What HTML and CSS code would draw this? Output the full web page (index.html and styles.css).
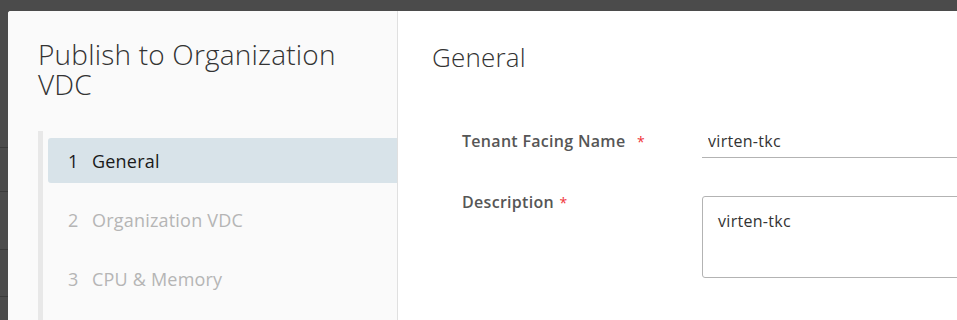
FILE: index.html
```html
<!DOCTYPE html>
<html lang="en">
<head>
<meta charset="UTF-8" />
<title>Publish to Organization VDC</title>
<link rel="stylesheet" href="styles.css">
</head>
<body>

<div class="backdrop">
  <div class="bg-lines">
    <span></span><span></span><span></span><span></span>
  </div>

  <div class="modal">
    <nav class="wizard-nav">
      <h2>Publish to Organization VDC</h2>
      <div class="steps">
        <a class="step active"><span class="num">1</span>General</a>
        <a class="step"><span class="num">2</span>Organization VDC</a>
        <a class="step"><span class="num">3</span>CPU &amp; Memory</a>
      </div>
    </nav>

    <main class="wizard-body">
      <h3>General</h3>
      <form class="form">
        <div class="row">
          <label for="tenant-name">Tenant Facing Name <span class="req wide">*</span></label>
          <input type="text" id="tenant-name" value="virten-tkc" />
        </div>
        <div class="row row-area">
          <label for="desc">Description <span class="req">*</span></label>
          <textarea id="desc">virten-tkc</textarea>
        </div>
      </form>
    </main>
  </div>
</div>

</body>
</html>
```

FILE: styles.css
```css
:root {
  --overlay: #4b4b4b;
  --nav-bg: #fafafa;
  --active: #d8e3e9;
  --text: #333;
  --muted: #b5b5b5;
  --border: #b3b3b3;
}
html, body {
  margin: 0; padding: 0;
  height: 100%;
  overflow: hidden;
}
body {
  font-family: 'Open Sans', 'Noto Sans', sans-serif;
  background: var(--overlay);
  color: var(--text);
}
.backdrop {
  position: relative;
  height: 100%;
  padding: 11px 0 0 8px;
  box-sizing: border-box;
}
.bg-lines span {
  position: absolute;
  left: 0;
  width: 8px;
  height: 1px;
  background: #3a3a3a;
}
.bg-lines span:nth-child(1) { top: 147px; }
.bg-lines span:nth-child(2) { top: 191px; }
.bg-lines span:nth-child(3) { top: 249px; }
.bg-lines span:nth-child(4) { top: 296px; }

.modal {
  display: flex;
  height: 100%;
  background: white;
  border-top-left-radius: 3px;
  overflow: hidden;
}
.wizard-nav {
  width: 390px;
  flex-shrink: 0;
  background: var(--nav-bg);
  border-right: 1px solid #e0e0e0;
  padding: 28px 0 0 30px;
  box-sizing: border-box;
}
.wizard-nav h2 {
  margin: 0 0 32px 0;
  font-size: 28px;
  font-weight: 300;
  line-height: 30px;
  color: #333;
  letter-spacing: 0.2px;
  width: 320px;
}
.steps {
  border-left: 5px solid #e8e8e8;
  padding: 7px 0 0 5px;
  display: flex;
  flex-direction: column;
  gap: 14px;
  height: 200px;
}
.step {
  display: flex;
  align-items: center;
  height: 45px;
  padding-left: 20px;
  font-size: 18px;
  letter-spacing: 0.2px;
  color: var(--muted);
  border-radius: 3px 0 0 3px;
}
.step .num {
  width: 24px;
}
.step.active {
  background: var(--active);
  color: #1a1a1a;
}

.wizard-body {
  flex-grow: 1;
  padding: 30px 0 0 34px;
}
.wizard-body h3 {
  margin: 0;
  font-size: 26px;
  font-weight: 300;
  line-height: 32px;
  color: #333;
  letter-spacing: 0.2px;
}
.form {
  margin-top: 57px;
  padding-left: 30px;
}
.row {
  display: flex;
  align-items: flex-start;
  margin-bottom: 38px;
}
.row label {
  width: 240px;
  flex-shrink: 0;
  font-size: 16px;
  font-weight: 600;
  letter-spacing: 0.3px;
  color: #565656;
  line-height: 22px;
}
.row-area label {
  margin-top: -5px;
}
.req {
  color: #f0353a;
  font-weight: 400;
  font-size: 14px;
  margin-left: 1px;
}
.req.wide {
  margin-left: 7px;
}
.row input {
  flex-grow: 1;
  border: none;
  border-bottom: 1px solid var(--border);
  background: transparent;
  font-family: inherit;
  font-size: 16px;
  letter-spacing: 0.3px;
  line-height: 22px;
  color: #333;
  padding: 0 0 5px 6px;
  height: 22px;
  outline: none;
  margin-right: -10px;
}
.row textarea {
  flex-grow: 1;
  height: 82px;
  box-sizing: border-box;
  border: 1px solid var(--border);
  border-radius: 3px;
  font-family: inherit;
  font-size: 16px;
  letter-spacing: 0.3px;
  line-height: 22px;
  color: #333;
  padding: 13px 15px;
  resize: none;
  outline: none;
  margin-right: -10px;
}
```
